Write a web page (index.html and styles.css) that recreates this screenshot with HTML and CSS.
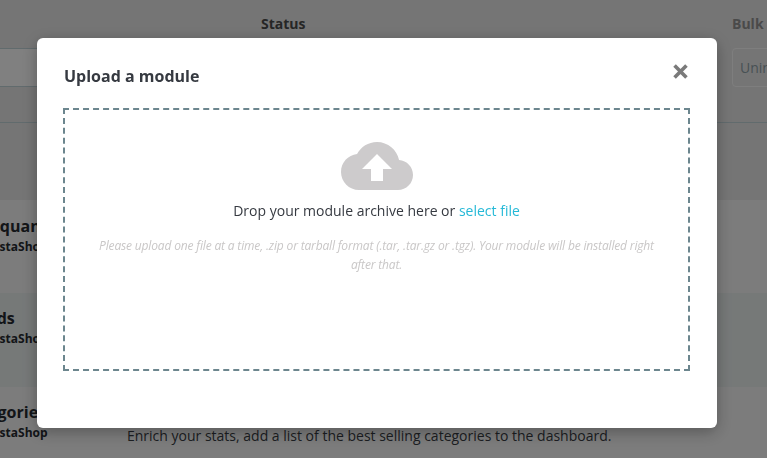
FILE: index.html
```html
<!DOCTYPE html>
<html lang="en">
<head>
<meta charset="utf-8">
<title>Upload a module</title>
<link rel="stylesheet" href="styles.css">
</head>
<body>
<div class="page">
  <div class="filters">
    <div class="filter-heads">
      <span class="head-status">Status</span>
      <span class="head-bulk">Bulk actions</span>
    </div>
    <div class="filter-row">
      <div class="search-input"></div>
      <div class="bulk-select">Uninstall</div>
    </div>
  </div>
  <div class="modules">
    <div class="module module-first">
      <div class="mod-name"><strong class="q">Available quantities</strong><span>by PrestaShop</span></div>
    </div>
    <div class="module module-second">
      <div class="mod-name"><strong class="d">Dashboard Trends</strong><span>by PrestaShop</span></div>
    </div>
    <div class="module module-third">
      <div class="mod-name"><strong class="c">Best categories</strong><span>by PrestaShop</span></div>
      <p class="mod-desc">Enrich your stats, add a list of the best selling categories to the dashboard.</p>
    </div>
  </div>
</div>
<div class="overlay"></div>
<div class="modal">
  <div class="modal-head">
    <h4>Upload a module</h4>
    <svg class="close" viewBox="0 0 16 16" width="17" height="17" aria-label="Close"><path d="M2.4 2.4 13.6 13.6M13.6 2.4 2.400 13.600" fill="none" stroke="#7a7a7a" stroke-width="3.4"/></svg>
  </div>
  <div class="drop">
    <svg class="cloud" viewBox="0 4 24 16" width="72" height="48"><path fill="#cdcbcc" d="M19.35 10.04C18.67 6.59 15.64 4 12 4 9.11 4 6.6 5.64 5.35 8.04 2.34 8.36 0 10.91 0 14c0 3.31 2.69 6 6 6h13c2.76 0 5-2.24 5-5 0-2.64-2.05-4.78-4.65-4.96zM14 13v4h-4v-4H7l5-5 5 5h-3z"/></svg>
    <p class="drop-line">Drop your module archive here or <a href="#">select file</a></p>
    <p class="drop-help">Please upload one file at a time, .zip or tarball format (.tar, .tar.gz or .tgz). Your module will be installed right after that.</p>
  </div>
</div>
</body>
</html>
```

FILE: styles.css
```css
* { box-sizing: border-box; }
html, body { margin: 0; height: 100%; overflow: hidden; }
body { background: #fff; font-family: "Open Sans", "Noto Sans", sans-serif; color: #363a41; }

.page { height: 458px; overflow: hidden; background: #e1e1e1; }

.filters { height: 200px; }
.filter-heads { height: 48px; display: flex; align-items: flex-start; padding: 14px 0 0 261px; font-size: 14px; font-weight: 700; line-height: 20px; white-space: nowrap; }
.head-status { flex: none; width: 471px; color: #4a4a4a; }
.head-bulk { flex: none; color: #8f8f8f; }
.filter-row { height: 75px; display: flex; gap: 32px; align-items: flex-start; border-bottom: 1px solid #bbcdd2; overflow: hidden; }
.search-input { flex: none; width: 700px; height: 39px; background: #f6f6f6; border-top: 1px solid #bbcdd2; border-bottom: 1px solid #bbcdd2; }
.bulk-select { flex: none; width: 200px; height: 39px; border: 1px solid #f2f2f2; border-radius: 4px; padding: 0 7px; font-size: 14px; line-height: 37px; color: #8a9ba1; }

.module { height: 94px; display: flex; background: #eeeeee; }
.module-first { height: 93px; padding-top: 15px; }
.module-second { padding-top: 14px; background: #e3e8e7; }
.module-third { padding-top: 14px; }
.mod-name { width: 127px; flex: none; display: flex; flex-direction: column; white-space: nowrap; overflow: hidden; }
.mod-name strong { font-size: 16px; line-height: 22px; color: #25292e; }
.mod-name span { font-size: 12px; font-weight: 700; line-height: 16px; margin: 2px 0 0 -38px; color: #25292e; }
.mod-name .q { margin-left: -78px; }
.mod-name .d { margin-left: -131px; }
.mod-name .c { margin-left: -76px; }
.mod-desc { margin: 25px 0 0; font-size: 14px; line-height: 20px; color: #363a41; white-space: nowrap; }

.overlay { position: fixed; inset: 0; background: rgba(0, 0, 0, .48); }

.modal { position: fixed; left: 37px; top: 38px; width: 680px; height: 390px; background: #fff; border-radius: 6px; padding: 0 27px 0 26px; box-shadow: 0 4px 16px rgba(0, 0, 0, .3); }
.modal-head { height: 70px; display: flex; justify-content: space-between; align-items: flex-start; }
.modal-head h4 { margin: 27px 0 0 1px; font-size: 16px; line-height: 22px; font-weight: 700; color: #363a41; }
.close { margin: 25px 1px 0 0; display: block; }

.drop { height: 263px; border: 2px dashed #6c868e; display: flex; flex-direction: column; align-items: center; padding-top: 32px; }
.cloud { display: block; flex: none; }
.drop-line { margin: 11px 0 0; font-size: 14px; line-height: 20px; color: #363a41; }
.drop-line a { color: #25b9d7; text-decoration: none; }
.drop-help { margin: 15px 0 0; width: 570px; text-align: center; font-size: 12px; line-height: 19px; letter-spacing: -.16px; font-style: italic; color: #c9c7c7; }
```
